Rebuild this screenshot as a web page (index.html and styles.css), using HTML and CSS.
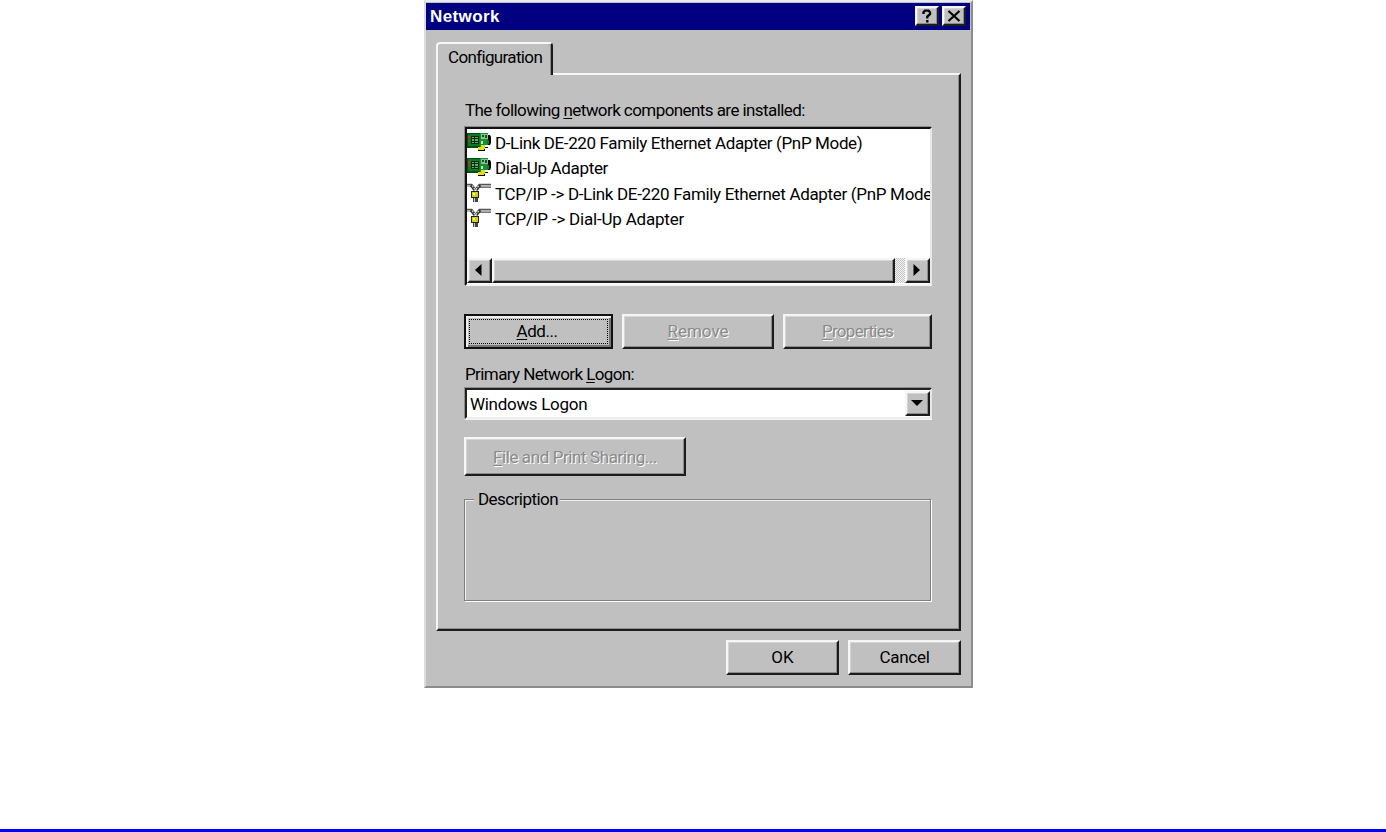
FILE: index.html
```
<!DOCTYPE html>
<html lang="en">
<head>
  <meta charset="UTF-8" />
  <meta name="viewport" content="width=device-width, initial-scale=1" />
  <title>Network</title>
  <link rel="stylesheet" href="styles.css">
</head>
<body>

<!-- Shared icons -->
<svg class="icon-defs" width="0" height="0">
  <symbol id="icon-adapter" viewBox="0 0 24 20">
    <path d="M0 1h13v15H0z" fill="#084a12"/>
    <path d="M1 2h12v12H1z" fill="#0b7a22"/>
    <path d="M4 4h8v8H4z" fill="#032d0a"/>
    <path d="M5 5h2v1H5zM8 5h3v1H8zM5 7h2v2H5zM8 7h3v2H8zM5 10h2v1H5zM8 10h3v1H8z" fill="#6fa878"/>
    <path d="M1 4h2v2H1zM1 8h2v1H1z" fill="#e0251b"/>
    <path d="M21 3h2l1 2v6l-1 2h-2v3h-3v3h-7v-4h10z" fill="#000"/>
    <path d="M13 1h8v12h-3v2h-5z" fill="#12912c"/>
    <path d="M14 2h7v5h-7z" fill="#8fbd98"/>
    <path d="M15 3h2v2h-2zM18 3h2v3h-2z" fill="#0b5c1b"/>
    <path d="M14 9h2v3h-2z" fill="#c7ddc9"/>
    <path d="M20 8h2v4h-2z" fill="#0b7a22"/>
    <path d="M11 15h6v3h-6zM14 13h4v4h-4z" fill="#e5dc12"/>
  </symbol>
  <symbol id="icon-protocol" viewBox="0 0 24 20">
    <path d="M0 1.500h5M12 1.500h12" stroke="#555" stroke-width="1.500"/>
    <path d="M0 3h4M12 3h12" stroke="#aaa" stroke-width="1.500"/>
    <path d="M12 4.300h12" stroke="#555" stroke-width="1"/>
    <path d="M4 2l4 5M13 2L9 7" stroke="#333" stroke-width="3.200" fill="none"/>
    <path d="M5 2.500L8.500 7 12 2.500" stroke="#ddd" stroke-width="1.200" fill="none" stroke-dasharray="2 1"/>
    <path d="M4 8h8v7H4z" fill="#222"/>
    <path d="M5 9h6v5H5z" fill="#d8cf10"/>
    <path d="M6 10h2v2H6z" fill="#fff9a0"/>
    <path d="M6 15h5v4H6z" fill="#444"/>
    <path d="M7 15h1v4H7z" fill="#ccc"/>
  </symbol>
</svg>

<div class="dialog">
  <div class="title-bar">
    <h1>Network</h1>
    <button class="title-btn" aria-label="Help">
      <svg width="12" height="14" viewBox="0 0 12 14"><path d="M2.500 5V3.200L4 1.700h3.500L9 3.200v2L6.300 7.600V9.500M6.300 11v2.500" fill="none" stroke="#000" stroke-width="2.300"/></svg>
    </button>
    <button class="title-btn close" aria-label="Close">
      <svg width="14" height="12" viewBox="0 0 14 12"><path d="M1.500 1l11 10M12.500 1l-11 10" stroke="#000" stroke-width="2.200"/></svg>
    </button>
  </div>

  <div class="tab"><span class="t-tab">Configuration</span></div>

  <div class="panel">
    <div class="label t-list">The following <u>n</u>etwork components are installed:</div>

    <div class="listbox">
      <ul>
        <li><svg class="icon"><use href="#icon-adapter"/></svg><span class="t-dlink">D-Link DE-220 Family Ethernet Adapter (PnP Mode)</span></li>
        <li><svg class="icon"><use href="#icon-adapter"/></svg><span class="t-dialup">Dial-Up Adapter</span></li>
        <li><svg class="icon"><use href="#icon-protocol"/></svg><span class="t-tcp-dlink">TCP/IP -&gt; D-Link DE-220 Family Ethernet Adapter (PnP Mode</span></li>
        <li><svg class="icon"><use href="#icon-protocol"/></svg><span class="t-tcp">TCP/IP -&gt; Dial-Up Adapter</span></li>
      </ul>
      <div class="scrollbar">
        <div class="arrow-btn"><svg width="7" height="12" viewBox="0 0 7 12"><path d="M6.500 0v12L0 6z"/></svg></div>
        <div class="thumb"></div>
        <div class="track"></div>
        <div class="arrow-btn"><svg width="7" height="12" viewBox="0 0 7 12"><path d="M.5 0v12L7 6z"/></svg></div>
      </div>
    </div>

    <div class="actions">
      <button class="btn add"><span class="t-add"><u>A</u>dd...</span></button>
      <button class="btn remove disabled"><span class="t-remove"><u>R</u>emove</span></button>
      <button class="btn props disabled"><span class="t-props"><u>P</u>roperties</span></button>
    </div>

    <div class="label logon-label t-logon">Primary Network <u>L</u>ogon:</div>
    <div class="select">
      <span class="t-windows">Windows Logon</span>
      <div class="arrow-btn"><svg width="12" height="6" viewBox="0 0 12 6"><path d="M0 0h12L6 6z"/></svg></div>
    </div>

    <button class="btn sharing disabled"><span class="t-sharing"><u>F</u>ile and Print Sharing...</span></button>

    <fieldset>
      <legend><span class="t-desc">Description</span></legend>
    </fieldset>
  </div>

  <div class="footer">
    <button class="btn"><span>OK</span></button>
    <button class="btn"><span class="t-cancel">Cancel</span></button>
  </div>
</div>

<div class="rule"></div>

</body>
</html>
```
FILE: styles.css
```
:root {
  --face: #c0c0c0;
  --light: #f6f6f6;
  --light-2: #dcdcdc;
  --dark: #1c1c1c;
  --navy: #000080;
}

* {
  box-sizing: border-box;
  margin: 0;
  padding: 0;
}

body {
  background: #fff;
  color: #000;
  height: 100vh;
  overflow: hidden;
  display: flex;
  flex-direction: column;
  justify-content: space-between;
  font: 17px/20px Roboto, "Liberation Sans", sans-serif;
}

u {
  text-decoration-thickness: 1px;
  text-underline-offset: 2px;
  text-decoration-skip-ink: none;
}

.icon-defs {
  position: absolute;
}

.dialog {
  width: 549px;
  height: 688px;
  margin-left: 424px;
  background: var(--face);
  border: 2px solid;
  border-color: #ececec #8c8c8c #8c8c8c var(--light-2);
  padding: 1px 1px 1px 0;
}

.title-bar {
  height: 27px;
  background: var(--navy);
  display: flex;
  align-items: center;
  padding: 0 4px;
}

.title-bar h1 {
  flex: 1;
  color: #fff;
  font: bold 17px/20px "Liberation Sans", Arial, sans-serif;
  letter-spacing: 0.4px;
}

/* Raised controls */
.title-btn, .arrow-btn, .btn, .thumb {
  background: var(--face);
  border: 2px solid;
  border-color: var(--light) var(--dark) var(--dark) var(--light);
  box-shadow: inset -1px -1px #8c8c8c, inset 1px 1px #d6d6d6;
  display: flex;
  align-items: center;
  justify-content: center;
}

.title-btn {
  width: 24px;
  height: 20px;
  margin-bottom: 1px;
}

.title-btn.close {
  margin-left: 3px;
}

.tab {
  position: relative;
  width: 117px;
  height: 33px;
  margin: 12px 0 -2px 10px;
  padding: 3px 0 0 10px;
  background: var(--face);
  border: 2px solid;
  border-color: var(--light) var(--dark) transparent var(--light);
  border-bottom: none;
  border-radius: 4px 4px 0 0;
  box-shadow: inset -1px 0 #8c8c8c;
}

.panel {
  width: 525px;
  height: 558px;
  margin-left: 10px;
  padding: 25px 27px 0;
  border: 2px solid;
  border-color: var(--light) var(--dark) var(--dark) var(--light);
  box-shadow: inset -1px -1px #8c8c8c;
}

.label {
  white-space: nowrap;
}

.listbox {
  height: 159px;
  margin-top: 7px;
  background: #fff;
  border: 2px solid;
  border-color: #111 #e8e8e8 #f4f4f4 #111;
  box-shadow: -1px -1px #8c8c8c;
  display: flex;
  flex-direction: column;
  justify-content: space-between;
  overflow: hidden;
}

.listbox ul {
  list-style: none;
  padding-top: 1px;
}

.listbox li {
  height: 25.5px;
  display: flex;
  align-items: center;
  gap: 4px;
  white-space: nowrap;
}

.icon {
  width: 24px;
  height: 20px;
  flex: none;
  margin-bottom: 2px;
}

.scrollbar {
  display: flex;
  height: 25px;
  margin-bottom: 1px;
}

.arrow-btn {
  width: 25px;
  height: 25px;
  flex: none;
  padding: 0 2px 1px 0;
}

.thumb {
  width: 403px;
}

.track {
  flex: 1;
  background: repeating-conic-gradient(#c4c4c4 0 25%, #f4f4f4 0 50%) 0 0 / 2px 2px;
}

.actions {
  display: flex;
  justify-content: space-between;
  margin: 28px 0 0 -1px;
}

.btn {
  width: 113px;
  height: 35px;
  padding-bottom: 2px;
  color: #000;
  font: inherit;
}

.add {
  position: relative;
  width: 149px;
  padding-right: 3px;
  border-color: #111;
  box-shadow: inset 2px 2px #eee, inset -2px -2px #777;
}

/* Focus rectangle */
.add::after {
  content: "";
  position: absolute;
  inset: 3px;
  border: 1px dotted #000;
}

.remove {
  width: 152px;
}

.props {
  width: 149px;
}

.disabled {
  color: #8a8a8a;
  text-shadow: 1px 1px #fff;
}

.logon-label {
  margin-top: 15px;
}

.select {
  height: 31px;
  margin-top: 4px;
  background: #fff;
  border: 2px solid;
  border-color: #222 #e8e8e8 #eee #222;
  box-shadow: -1px -1px #8c8c8c, 0 1px #f4f4f4;
  display: flex;
  align-items: center;
  justify-content: space-between;
  padding-left: 3px;
}

.sharing {
  width: 222px;
  height: 39px;
  padding-bottom: 0;
  margin: 18px 0 0 -1px;
}

fieldset {
  height: 112px;
  margin: 13px 1px 0 -1px;
  border: 1px solid #808080;
  box-shadow: inset 1px 1px #eee, 1px 1px #fff;
  padding: 0 9px;
}

legend {
  background: var(--face);
  padding: 0 2px 0 4px;
}

.footer {
  display: flex;
  justify-content: flex-end;
  gap: 9px;
  margin: 9px 9px 0 0;
}

/* Text tracking */
.t-tab { letter-spacing: -0.65px; }
.t-list { letter-spacing: -0.57px; }
.t-dlink { letter-spacing: -0.37px; }
.t-dialup { letter-spacing: -0.33px; }
.t-tcp-dlink { letter-spacing: -0.32px; }
.t-tcp { letter-spacing: -0.2px; }
.t-add { letter-spacing: -0.45px; }
.t-remove { letter-spacing: 0; }
.t-props { letter-spacing: -0.7px; }
.t-logon { letter-spacing: -0.6px; }
.t-windows { letter-spacing: -0.3px; }
.t-sharing { letter-spacing: -0.4px; }
.t-desc { letter-spacing: -0.55px; }
.t-cancel { letter-spacing: -0.3px; }

.rule {
  height: 3px;
  background: #00f;
}
```
